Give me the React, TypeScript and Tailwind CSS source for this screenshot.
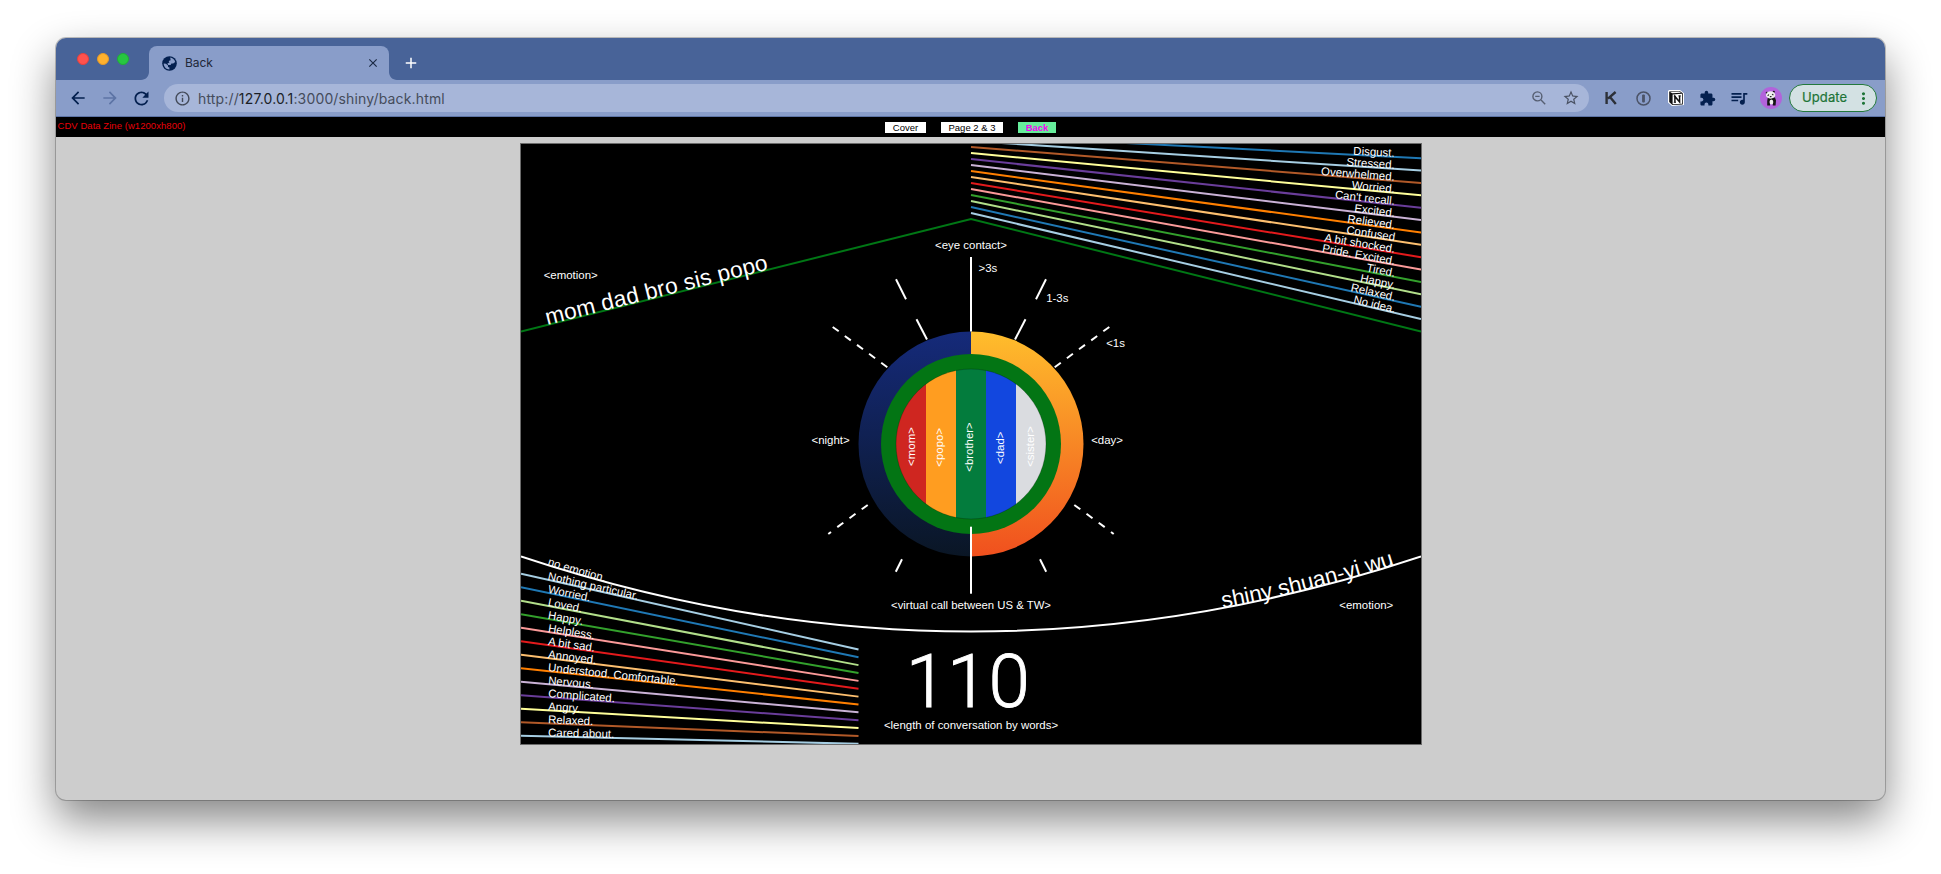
import React from "react";
import {
  MdArrowBack,
  MdArrowForward,
  MdClose,
  MdExtension,
  MdInfoOutline,
  MdMoreVert,
  MdQueueMusic,
  MdRefresh,
  MdStarBorder,
  MdAdd,
} from "react-icons/md";

const PAIRED = [
  "#a6cee3", "#1f78b4", "#b2df8a", "#33a02c", "#fb9a99", "#e31a1c", "#fdbf6f",
  "#ff7f00", "#cab2d6", "#6a3d9a", "#ffff99", "#b15928", "#a6cee3", "#1f78b4",
];

const FAMILY_EMOTIONS = [
  "No idea.", "Relaxed.", "Happy.", "Tired.", "Pride. Excited.", "A bit shocked.", "Confused",
  "Relieved.", "Excited.", "Can't recall.", "Worried.", "Overwhelmed.", "Stressed.", "Disgust.",
];

const SHINY_EMOTIONS = [
  "Nothing particular.", "Worried.", "Loved.", "Happy.", "Helpless.", "A bit sad.", "Annoyed.",
  "Understood. Comfortable.", "Nervous.", "Complicated.", "Angry.", "Relaxed.", "Cared about.",
];

const STRIPES = [
  { label: "<mom>", fill: "#cf2620", x: 896, tx: 914.7, ty: 446.5 },
  { label: "<popo>", fill: "#ff9d20", x: 926, tx: 943, ty: 447.3 },
  { label: "<brother>", fill: "#037c3d", x: 956, tx: 973, ty: 447 },
  { label: "<dad>", fill: "#1247df", x: 986, tx: 1003.5, ty: 447.7 },
  { label: "<sister>", fill: "#dadce0", x: 1016, tx: 1034, ty: 446.5 },
];

// Rays to the right of the centre line; the left side mirrors them around x = 971.
const RAYS = [
  [1046, 279.3, 1036, 299.3], [1025.5, 319.3, 1015, 339.5],
  [1109.3, 327, 1103.3, 331.3], [1097.2, 336, 1091.2, 340.4], [1085, 344.9, 1079, 349.3],
  [1072.9, 353.8, 1066.9, 358.2], [1060.8, 362.7, 1054.7, 367.2],
  [1074.3, 505, 1080.3, 509.3], [1086.5, 513.8, 1092.5, 518.2], [1098.7, 522.7, 1104.7, 527.1],
  [1111, 532, 1113.7, 534],
  [1040, 559.3, 1046.2, 571.8],
];

function Label({ x, y, children, anchor = "start" }: { x: number; y: number; children: string; anchor?: "start" | "middle" | "end" }) {
  return <text x={x} y={y} textAnchor={anchor}>{children}</text>;
}

function Zine() {
  return (
    <svg
      viewBox="520 143 902 602"
      className="block h-[602px] w-[902px] shrink-0 bg-black"
      fontFamily="'Liberation Sans', Arial, sans-serif"
      fontSize={11.45}
      fill="#fff"
    >
      <defs>
        <linearGradient id="night" x1="0" y1="0" x2="0" y2="1">
          <stop offset="0" stopColor="#152a7a" />
          <stop offset="1" stopColor="#0a1625" />
        </linearGradient>
        <linearGradient id="day" x1="0" y1="0" x2="0" y2="1">
          <stop offset="0" stopColor="#ffbe2c" />
          <stop offset="1" stopColor="#f0501e" />
        </linearGradient>
        <clipPath id="family"><circle cx="971" cy="444" r="75" /></clipPath>
        <clipPath id="canvas"><rect x="521" y="144" width="900" height="600" /></clipPath>
      </defs>

      <g clipPath="url(#canvas)">
        <g fill="none" strokeWidth={2}>
          {PAIRED.map((c, i) => (
            <path key={i} id={`fam${i}`} stroke={c} d={`M971 ${213 - 6 * i}L1421 ${319.1 - 12.375 * i}`} />
          ))}
          {SHINY_EMOTIONS.map((_, i) => (
            <path key={i} id={`shy${i}`} stroke={PAIRED[i]} d={`M521 ${573.75 + 13.5 * i}L858.5 ${649.4 + 7.87 * i}`} />
          ))}
          <path id="roof" stroke="#007715" d="M521 331.5L971 219L1421 331.5" />
          <path id="smile" stroke="#fff" d="M521 556.5Q971 706.5 1421 556.5" />
        </g>

        <g>
          {FAMILY_EMOTIONS.map((t, i) => (
            <text key={i} textAnchor="end">
              <textPath href={`#fam${i}`} startOffset="94.1%">{t}</textPath>
            </text>
          ))}
          {SHINY_EMOTIONS.map((t, i) => (
            <text key={i}>
              <textPath href={`#shy${i}`} startOffset="27">{t}</textPath>
            </text>
          ))}
          <text><textPath href="#smile" startOffset="27.5">no emotion.</textPath></text>
        </g>
        <text fontSize={22.7} letterSpacing={0.2}>
          <textPath href="#roof" startOffset="27">mom dad bro sis popo</textPath>
        </text>
        <text fontSize={22.5} textAnchor="end" letterSpacing={-0.08}>
          <textPath href="#smile" startOffset="97%">shiny shuan-yi wu</textPath>
        </text>

        <g stroke="#fff" strokeWidth={2}>
          {RAYS.map(([a, b, c, d], i) => (
            <React.Fragment key={i}>
              <line x1={a} y1={b} x2={c} y2={d} />
              <line x1={1942 - a} y1={b} x2={1942 - c} y2={d} />
            </React.Fragment>
          ))}
        </g>

        <path fill="url(#night)" d="M971 331.5A112.5 112.5 0 0 0 971 556.5Z" />
        <path fill="url(#day)" d="M971 331.5A112.5 112.5 0 0 1 971 556.5Z" />
        <circle cx="971" cy="444" r="90" fill="#037514" />
        <g clipPath="url(#family)">
          {STRIPES.map((s) => (
            <rect key={s.label} x={s.x} y="369" width="30" height="150" fill={s.fill} />
          ))}
        </g>
        <circle cx="971" cy="444" r="75" fill="none" stroke="#000" strokeOpacity="0.35" strokeWidth="0.6" />
        {STRIPES.map((s) => (
          <text key={s.label} transform={`translate(${s.tx} ${s.ty}) rotate(-90)`} textAnchor="middle">
            {s.label}
          </text>
        ))}
        <rect x="970" y="257" width="2" height="74.5" />
        <rect x="970" y="526.7" width="2" height="67" />

        <Label x={971} y={249} anchor="middle">{"<eye contact>"}</Label>
        <Label x={978.5} y={272}>{">3s"}</Label>
        <Label x={1046.2} y={302}>1-3s</Label>
        <Label x={1106.2} y={347}>{"<1s"}</Label>
        <Label x={811.5} y={444}>{"<night>"}</Label>
        <Label x={1091.2} y={444}>{"<day>"}</Label>
        <Label x={543.7} y={279}>{"<emotion>"}</Label>
        <Label x={1393.3} y={609} anchor="end">{"<emotion>"}</Label>
        <text x={971} y={609} textAnchor="middle" fontSize={11.35}>{"<virtual call between US & TW>"}</text>
        <Label x={971} y={729} anchor="middle">{"<length of conversation by words>"}</Label>
        <text
          x={967.8}
          y={706.6}
          textAnchor="middle"
          fontSize={74.5}
          fontFamily="Roboto, sans-serif"
          fontWeight={300}
          stroke="#fff"
          strokeWidth={0.9}
        >
          110
        </text>
      </g>
      <rect x="520.5" y="143.5" width="901" height="601" fill="none" stroke="#6b6b6b" />
    </svg>
  );
}

function Globe() {
  return (
    <svg viewBox="0 0 15 15" className="size-[15px]">
      <circle cx="7.5" cy="7.5" r="7.3" fill="#04204f" />
      <path fill="#899dc9" d="M8.2 1.6C10.6 1.8 12.6 3.6 13.2 6L11.2 7.6H9.4L8.6 9H6.2L5.4 7.4L7.4 6.4L6.6 5L8.6 4.2Z" />
      <path fill="#899dc9" d="M1.7 7.4L4 7.8L6 9.6V11L7.4 11.4V13.4C4.2 13.2 1.7 10.8 1.7 7.4Z" />
    </svg>
  );
}

function ZoomOut() {
  return (
    <svg viewBox="0 0 14 14" className="size-3.5" fill="none" stroke="#565f72" strokeWidth="1.4">
      <circle cx="5.4" cy="5.4" r="4.5" />
      <path d="M8.8 8.8L13.2 13.2M3.2 5.4H7.6" />
    </svg>
  );
}

function Notion() {
  return (
    <svg viewBox="0 0 16 16" className="size-4">
      <path fill="#fff" d="M1 0L12 0L16 3.2V15L4 16L0 12.5V1Z" />
      <path fill="#111" d="M1.2 1.6L11.6 .9L14.8 3.3V14.4L4.4 15.1L1.2 11.9Z" />
      <path fill="#fff" d="M4.6 4.4L14 3.8V13.7L4.6 14.3ZM2.2 1.9L11.3 1.4L13 2.7L4.2 3.3Z" />
      <path fill="none" stroke="#111" strokeWidth="1.5" d="M6.9 12.3V6.4L11.6 12V5.8" />
      <path fill="none" stroke="#111" strokeWidth="1" d="M5.8 6.2H7.6M10.4 5.9H12.8M5.8 12.3H8" />
    </svg>
  );
}

function Avatar() {
  return (
    <svg viewBox="0 0 22 22" className="size-[22px]">
      <circle cx="11" cy="11" r="11" fill="#b263db" />
      <path fill="#151515" d="M7.8 10.5H15L16 13.5L15.6 18.4H12.8V15.5H10V18.4H7.2V14Z" />
      <ellipse cx="11.4" cy="15" rx="1.9" ry="2.6" fill="#eee" />
      <circle cx="6.8" cy="5.8" r="1.1" fill="#151515" />
      <circle cx="13.8" cy="4.8" r="1.1" fill="#151515" />
      <ellipse cx="10.6" cy="8" rx="4.7" ry="3.7" fill="#eee" />
      <path stroke="#222" strokeWidth="1.1" strokeLinecap="round" d="M8 8.4L8.6 7.8M12.4 7.4L13 7.8M10.3 9.6H11.1" />
    </svg>
  );
}

function TabFoot({ flip }: { flip?: boolean }) {
  return (
    <svg viewBox="0 0 8 8" className={flip ? "size-2 -scale-x-100" : "size-2"}>
      <path fill="#899dc9" d="M8 0V8H0C4.4 8 8 4.4 8 0Z" />
    </svg>
  );
}

export default function App() {
  return (
    <div className="h-[874px] w-[1941px] overflow-hidden bg-white pt-[38px] pl-14 font-['Inter',sans-serif]">
      <div className="flex h-[762px] w-[1829px] flex-col overflow-hidden rounded-[10px] bg-[#cdcdcd] shadow-[0_0_0_1px_rgba(0,0,0,0.22),0_20px_44px_rgba(0,0,0,0.48)]">
        <div className="flex h-[42px] shrink-0 items-end bg-[#486398] pl-[21px]">
          <div className="flex h-[42px] w-[64px] gap-2 pt-[15px]">
            <span className="size-3 rounded-full border border-[#e8403c] bg-[#ff524d]" />
            <span className="size-3 rounded-full border border-[#e79a26] bg-[#ffb12e]" />
            <span className="size-3 rounded-full border border-[#1fae37] bg-[#27c640]" />
          </div>
          <TabFoot />
          <div className="flex h-[34px] w-60 items-center rounded-t-lg bg-[#899dc9] pr-[9px] pl-[13px] text-[#202738]">
            <Globe />
            <span className="ml-2 flex-1 text-[12px] tracking-[-0.1px]">Back</span>
            <MdClose className="size-3.5 text-[#1c2a44]" />
          </div>
          <TabFoot flip />
          <MdAdd className="mb-[8px] ml-[5px] size-[18px] text-white" />
        </div>

        <div className="flex h-[37px] shrink-0 items-center border-b border-[#5d74a5] bg-[#899dc9] pr-2 pl-3 text-[#04204f]">
          <MdArrowBack className="size-5" />
          <MdArrowForward className="ml-3 size-5 text-[#5d74a5]" />
          <MdRefresh className="ml-[11px] size-[21px]" />
          <div className="ml-3 flex h-7 w-[1425px] items-center rounded-full bg-[#a7b6d9] pr-[9px] pl-[10px]">
            <MdInfoOutline className="size-[17px] text-[#434a59]" />
            <span className="ml-[7px] flex-1 text-[14px] tracking-[0.15px] text-[#454c5b]">
              http://<span className="text-[#1b1f27]">127.0.0.1</span>:3000/shiny/back.html
            </span>
            <span className="mr-4"><ZoomOut /></span>
            <MdStarBorder className="size-[18px] text-[#4a5263]" />
          </div>
          <svg viewBox="0 0 12 14" className="ml-4 h-[14px] w-3">
            <path fill="none" stroke="#2c3038" strokeWidth="2.4" d="M1.6 1V13M10.6 1L3 7.6M5 6L10.8 13" />
          </svg>
          <svg viewBox="0 0 15 15" className="ml-[19px] size-[15px]">
            <circle cx="7.5" cy="7.5" r="6.5" fill="none" stroke="#4b5367" strokeWidth="1.5" />
            <rect x="6.1" y="3.4" width="2.8" height="8.2" rx="1" fill="#4b5367" />
          </svg>
          <span className="ml-[17px]"><Notion /></span>
          <MdExtension className="ml-[15px] size-[17px]" />
          <MdQueueMusic className="ml-[13px] size-[20px]" />
          <span className="ml-[11px]"><Avatar /></span>
          <div className="ml-[7px] flex h-7 w-[88px] items-center rounded-full border border-[#23793c] bg-[#d3e1e3] pl-3 text-[13px] tracking-[0.1px] text-[#1d7437]">
            <span className="flex-1 [-webkit-text-stroke:0.2px_#1d7437]">Update</span>
            <MdMoreVert className="mr-[3px] size-[19px]" />
          </div>
        </div>

        <div className="grid h-5 shrink-0 grid-cols-[1fr_auto_1fr] items-center bg-black font-['Liberation_Sans',Arial,sans-serif] text-[9.5px] leading-[11px]">
          <span className="mb-[3px] pl-[1.5px] tracking-[0.05px] text-[#e80008]">CDV Data Zine (w1200xh800)</span>
          <nav className="mt-px flex gap-[15px]">
            <a className="w-[41px] bg-white text-center text-black">Cover</a>
            <a className="w-[62px] bg-white text-center text-black">{"Page 2 & 3"}</a>
            <a className="w-[38px] bg-[#66ed9b] text-center font-bold text-[#f400f4]">Back</a>
          </nav>
        </div>

        <main className="flex flex-1 justify-center pt-1.5">
          <Zine />
        </main>
      </div>
    </div>
  );
}
